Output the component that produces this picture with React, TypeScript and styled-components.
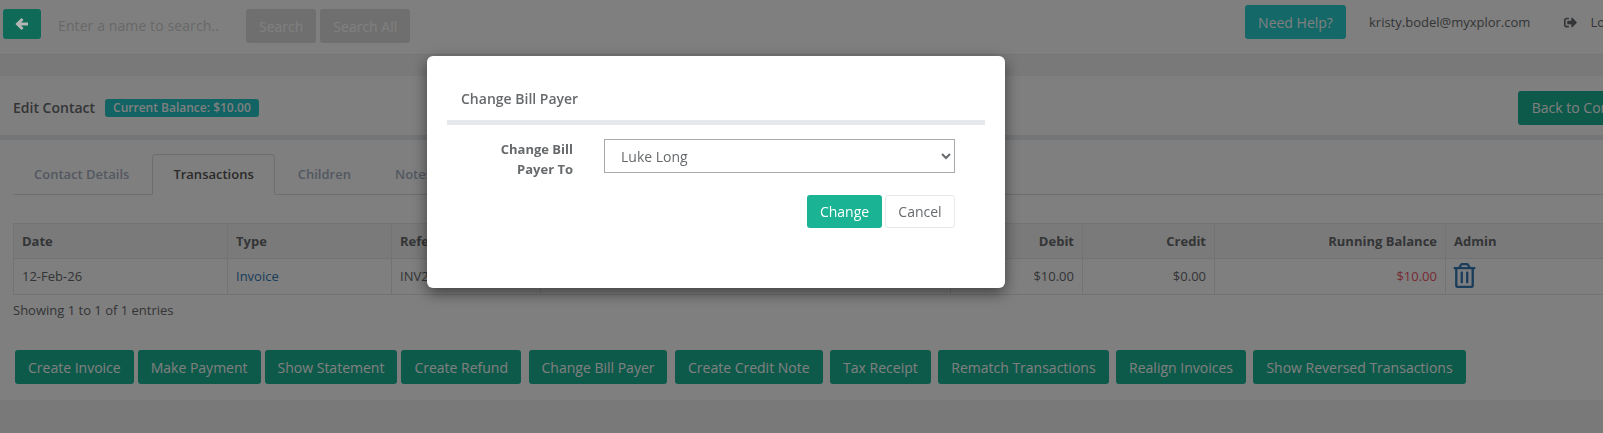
import styled, { createGlobalStyle } from "styled-components";
import { FaRegTrashAlt, FaSignOutAlt } from "react-icons/fa";

const GlobalStyle = createGlobalStyle`
  html, body {
    margin: 0;
    height: 100%;
    overflow: hidden;
    background: #f3f3f4;
    font-family: "Open Sans", "Liberation Sans", sans-serif;
    font-size: 13px;
    color: #676a6c;
  }
`;

const Page = styled.div`
  width: 1700px;
  height: 433px;
`;

const TopBar = styled.div`
  height: 55px;
  box-sizing: border-box;
  padding: 5px 0 0 3px;
  background: #fff;
  border-bottom: 1px solid #e7eaec;
  display: flex;
  align-items: flex-start;
`;

// sits above the backdrop, so its colours are the dimmed ones
const BackArrow = styled.button`
  position: relative;
  z-index: 11;
  width: 38px;
  height: 30px;
  margin-top: 4px;
  border: none;
  border-radius: 3px;
  background: #0f6b58;
  color: #b4b4b4;
  padding: 0;
  display: flex;
  align-items: center;
  justify-content: center;
`;

const SearchText = styled.div`
  width: 188px;
  margin: 4px 0 0 17px;
  height: 34px;
  line-height: 34px;
  font-size: 14px;
  letter-spacing: 0.1px;
  color: #d0d0d0;
`;

const GreyButton = styled.button`
  height: 34px;
  margin: 4px 4px 0 0;
  padding: 0 13px;
  border: none;
  border-radius: 3px;
  background: #dfdfdf;
  color: #fff;
  font: 14px "Open Sans", sans-serif;
`;

const TopRight = styled.div`
  margin-left: auto;
  width: 455px;
  display: flex;
  align-items: center;
`;

const HelpButton = styled.button`
  width: 101px;
  height: 34px;
  border: none;
  border-radius: 3px;
  background: #28d0d0;
  color: #fff;
  font: 14px "Open Sans", sans-serif;
`;

const Email = styled.span`
  margin-left: 23px;
  font-size: 13px;
  color: #676a6c;
`;

const Logout = styled.span`
  margin-left: 34px;
  font-size: 13px;
  color: #676a6c;
  display: flex;
  align-items: center;
  gap: 13px;
  white-space: nowrap;
`;

const Band = styled.div`
  height: 21px;
`;

const Header = styled.div`
  height: 59px;
  box-sizing: border-box;
  background: #fff;
  padding: 4px 0 0 13px;
  display: flex;
  align-items: center;
`;

const PageTitle = styled.h2`
  margin: 0;
  font-size: 14px;
  font-weight: 600;
  color: #676a6c;
`;

const Badge = styled.span`
  margin-left: 10px;
  height: 18px;
  line-height: 18px;
  padding: 0 8px;
  border-radius: 3px;
  background: #23c6c8;
  color: #fff;
  font-size: 12px;
  font-weight: 600;
`;

const BackButton = styled.button`
  margin-left: 1259px;
  height: 34px;
  padding: 0 14px;
  border: none;
  border-radius: 3px;
  background: #1ab394;
  color: #fff;
  font: 14px "Open Sans", sans-serif;
  white-space: nowrap;
`;

const Content = styled.div`
  height: 265px;
  box-sizing: border-box;
  background: #fff;
  border-top: 5px solid #e7eaec;
  padding: 14px 0 0 13px;
`;

const Tabs = styled.div`
  display: flex;
  gap: 2px;
  height: 41px;
  box-sizing: border-box;
  border-bottom: 1px solid #ddd;
  margin-right: 97px;
`;

const Tab = styled.div<{ $active?: boolean }>`
  height: 41px;
  box-sizing: border-box;
  padding: 0 20px;
  line-height: 38px;
  font-size: 13px;
  font-weight: 600;
  border-radius: 4px 4px 0 0;
  color: ${(p) => (p.$active ? "#555" : "#a7b1c2")};
  background: ${(p) => (p.$active ? "#fff" : "transparent")};
  border: 1px solid ${(p) => (p.$active ? "#ddd" : "transparent")};
  border-bottom-color: ${(p) => (p.$active ? "#fff" : "transparent")};
`;

const Table = styled.table`
  margin-top: 28px;
  width: 1667px;
  table-layout: fixed;
  border-collapse: collapse;
  font-size: 13px;
  border: 1px solid #e7e7e7;
`;

const Th = styled.th<{ $right?: boolean }>`
  height: 35px;
  box-sizing: border-box;
  padding: 0 8px;
  font-size: 13px;
  font-weight: 700;
  color: #676a6c;
  background: #f5f5f6;
  border: 1px solid #e7e7e7;
  text-align: ${(p) => (p.$right ? "right" : "left")};
`;

const Td = styled.td<{ $right?: boolean; $tone?: string }>`
  height: 36px;
  box-sizing: border-box;
  padding: 0 8px 1px;
  border: 1px solid #e7e7e7;
  color: ${(p) => p.$tone || "#676a6c"};
  text-align: ${(p) => (p.$right ? "right" : "left")};
`;

const TrashIcon = styled(FaRegTrashAlt)`
  display: block;
  font-size: 25px;
  margin: -2px 0 0 -2px;
  color: #337ab7;
`;

const Info = styled.div`
  margin-top: 6px;
  font-size: 13px;
  line-height: 18px;
  color: #676a6c;
`;

const ActionRow = styled.div`
  display: flex;
  gap: 4px;
  margin: 31px 0 0 2px;
`;

const ActionButton = styled.button`
  height: 34px;
  padding: 0 13px;
  border: none;
  border-radius: 3px;
  background: #1ab394;
  color: #fff;
  font: 14px "Open Sans", sans-serif;
  white-space: nowrap;

  &:nth-child(n + 5) {
    margin-left: 3.5px;
  }
`;

const Backdrop = styled.div`
  position: fixed;
  inset: 0;
  z-index: 10;
  background: rgba(0, 0, 0, 0.5);
`;

const Modal = styled.div`
  position: fixed;
  z-index: 20;
  left: 427px;
  top: 56px;
  width: 578px;
  height: 232px;
  box-sizing: border-box;
  padding: 20px 20px 0;
  background: #fff;
  border-radius: 6px;
  box-shadow: 0 5px 15px rgba(0, 0, 0, 0.5);
`;

const ModalTitle = styled.h4`
  margin: 0;
  padding: 13px 14px 11px;
  height: 49px;
  box-sizing: border-box;
  font-size: 14px;
  line-height: 20px;
  font-weight: 600;
  color: #676a6c;
  border-bottom: 5px solid #e6e9ee;
`;

const FormRow = styled.div`
  display: flex;
  margin-top: 14px;
  padding-right: 30px;
`;

const FieldLabel = styled.label`
  width: 126px;
  box-sizing: border-box;
  padding-left: 30px;
  font-size: 13px;
  line-height: 20px;
  font-weight: 700;
  text-align: right;
  color: #676a6c;
`;

const Select = styled.select`
  margin-left: 31px;
  flex: 1;
  height: 34px;
  box-sizing: border-box;
  padding: 0 12px;
  font: 14px "Open Sans", sans-serif;
  color: #676a6c;
  background: #fff;
  border: 1px solid #a9a9a9;
  border-radius: 0;
`;

const ModalActions = styled.div`
  display: flex;
  justify-content: flex-end;
  gap: 3px;
  margin-top: 16px;
  padding-right: 30px;
`;

const ChangeButton = styled.button`
  width: 75px;
  height: 33px;
  border: none;
  border-radius: 3px;
  background: #1ab394;
  color: #fff;
  font: 14px "Open Sans", sans-serif;
`;

const CancelButton = styled.button`
  width: 70px;
  height: 33px;
  border: 1px solid #e7eaec;
  border-radius: 3px;
  background: #fff;
  color: #676a6c;
  font: 14px "Open Sans", sans-serif;
`;

const actions = [
  "Create Invoice",
  "Make Payment",
  "Show Statement",
  "Create Refund",
  "Change Bill Payer",
  "Create Credit Note",
  "Tax Receipt",
  "Rematch Transactions",
  "Realign Invoices",
  "Show Reversed Transactions",
];

const App = () => {
  return (
    <>
      <GlobalStyle />
      <Page>
        <TopBar>
          <BackArrow>
            <svg width="14" height="14" viewBox="0 0 14 14" fill="none">
              <path
                d="M7.5 2 L2.5 7 L7.5 12 M3 7 H13"
                stroke="currentColor"
                strokeWidth="3"
              />
            </svg>
          </BackArrow>
          <SearchText>Enter a name to search..</SearchText>
          <GreyButton>Search</GreyButton>
          <GreyButton>Search All</GreyButton>
          <TopRight>
            <HelpButton>Need Help?</HelpButton>
            <Email>kristy.bodel@myxplor.com</Email>
            <Logout>
              <FaSignOutAlt />
              Log out
            </Logout>
          </TopRight>
        </TopBar>
        <Band />
        <Header>
          <PageTitle>Edit Contact</PageTitle>
          <Badge>Current Balance: $10.00</Badge>
          <BackButton>Back to Contacts</BackButton>
        </Header>
        <Content>
          <Tabs>
            <Tab>Contact Details</Tab>
            <Tab $active>Transactions</Tab>
            <Tab>Children</Tab>
            <Tab>Notes</Tab>
          </Tabs>
          <Table>
            <colgroup>
              <col width={214} />
              <col width={164} />
              <col width={149} />
              <col width={410} />
              <col width={132} />
              <col width={132} />
              <col width={231} />
              <col width={235} />
            </colgroup>
            <thead>
              <tr>
                <Th>Date</Th>
                <Th>Type</Th>
                <Th>Reference</Th>
                <Th />
                <Th $right>Debit</Th>
                <Th $right>Credit</Th>
                <Th $right>Running Balance</Th>
                <Th>Admin</Th>
              </tr>
            </thead>
            <tbody>
              <tr>
                <Td>12-Feb-26</Td>
                <Td $tone="#337ab7">Invoice</Td>
                <Td>INV2</Td>
                <Td />
                <Td $right>$10.00</Td>
                <Td $right>$0.00</Td>
                <Td $right $tone="#ed5565">
                  $10.00
                </Td>
                <Td>
                  <TrashIcon />
                </Td>
              </tr>
            </tbody>
          </Table>
          <Info>Showing 1 to 1 of 1 entries</Info>
          <ActionRow>
            {actions.map((label) => (
              <ActionButton key={label}>{label}</ActionButton>
            ))}
          </ActionRow>
        </Content>
      </Page>
      <Backdrop />
      <Modal>
        <ModalTitle>Change Bill Payer</ModalTitle>
        <FormRow>
          <FieldLabel>Change Bill Payer To</FieldLabel>
          <Select defaultValue="Luke Long">
            <option>Luke Long</option>
          </Select>
        </FormRow>
        <ModalActions>
          <ChangeButton>Change</ChangeButton>
          <CancelButton>Cancel</CancelButton>
        </ModalActions>
      </Modal>
    </>
  );
};

export default App;
